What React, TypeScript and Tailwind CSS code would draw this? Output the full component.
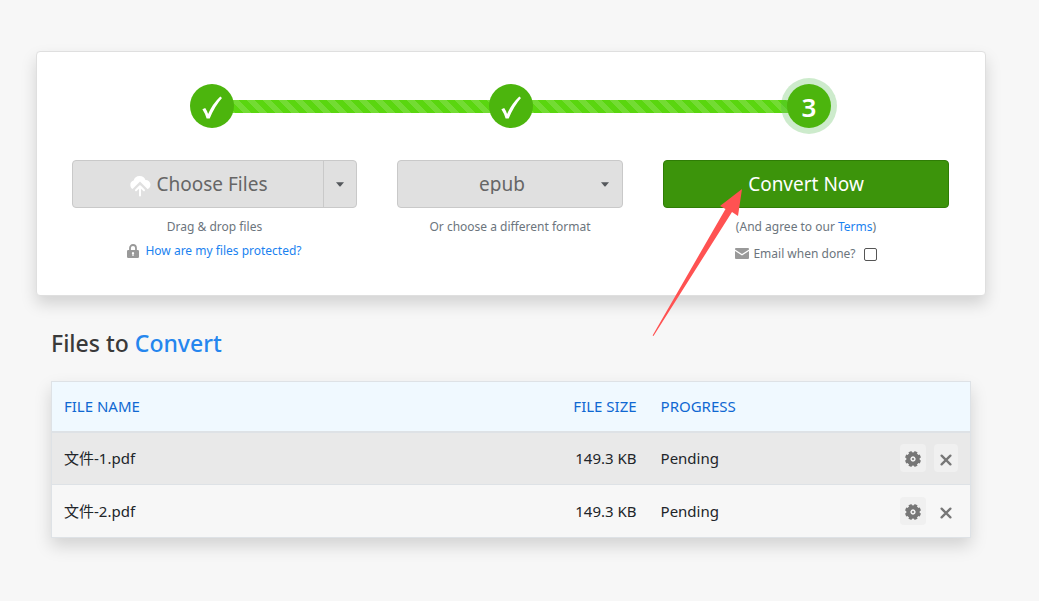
import type { ReactNode } from 'react';

const files = [
  { name: '文件-1.pdf', size: '149.3 KB', status: 'Pending' },
  { name: '文件-2.pdf', size: '149.3 KB', status: 'Pending' },
];

function StepBadge({ children }: { children: ReactNode }) {
  return (
    <li className="z-10 flex size-11 shrink-0 items-center justify-center rounded-full bg-[#4cb50d]">
      {children}
    </li>
  );
}

function CheckMark() {
  return (
    <svg viewBox="0 0 44 44" className="size-11" role="img" aria-label="Done">
      <path d="M12.4 25.2 L15.2 24 Q17 26.500 18.100 30 Q22.500 20 30.300 12.600 L32 14 Q24.500 22.500 19.700 34.600 L16.600 34.600 Q15 29 12.400 25.200 Z" fill="#fff" />
    </svg>
  );
}

function StepBar() {
  return (
    <li
      aria-hidden="true"
      className="-mx-1 h-[13px] flex-1 bg-[#5ad60f] bg-[linear-gradient(45deg,rgba(255,255,255,.15)_25%,transparent_25%,transparent_50%,rgba(255,255,255,.15)_50%,rgba(255,255,255,.15)_75%,transparent_75%)] bg-[length:16px_16px]"
    />
  );
}

function Caret() {
  return (
    <svg viewBox="0 0 8 5" className="h-[5px] w-2" fill="#55585c" aria-hidden="true">
      <path d="M0 0.300H8L4.600 4.200Q4 4.800 3.400 4.200Z" />
    </svg>
  );
}

function CloudUp() {
  return (
    <svg viewBox="0 0 22 22" className="h-[22px] w-[22px]" aria-hidden="true">
      <path
        d="M5.200 14.500A4.700 4.700 0 0 1 4.600 5.400A6.300 6.300 0 0 1 16.500 5.100A4.700 4.700 0 0 1 17 14.500Z"
        fill="#fff"
      />
      <path d="M4.800 16.200L11 10L17.200 16.200" fill="none" stroke="#e0e0e0" strokeWidth="5" />
      <path d="M11 20.500V12M7 15.300L11 11.300L15 15.300" fill="none" stroke="#fff" strokeWidth="2" strokeLinecap="round" strokeLinejoin="round" />
    </svg>
  );
}

function Lock() {
  return (
    <svg viewBox="0 0 12 14" className="h-[14px] w-3" aria-hidden="true">
      <path d="M3 6.500V4a3 3 0 0 1 6 0v2.500" fill="none" stroke="#999" strokeWidth="1.800" />
      <rect y="6" width="12" height="8" rx="1.200" fill="#999" />
      <path d="M6 8a1.200 1.200 0 0 1 .6 2.200V12H5.400v-1.800A1.200 1.200 0 0 1 6 8Z" fill="#fff" />
    </svg>
  );
}

function Envelope() {
  return (
    <svg viewBox="0 0 14 11" className="h-[11px] w-[14px]" fill="#999" aria-hidden="true">
      <path d="M1 0H13Q14 0 14 1V1.600L7 6L0 1.600V1Q0 0 1 0Z" />
      <path d="M0 3L7 7.400L14 3V10Q14 11 13 11H1Q0 11 0 10Z" />
    </svg>
  );
}

function Gear() {
  return (
    <svg viewBox="0 0 16 16" className="size-4" aria-hidden="true">
      <circle cx="8" cy="8" r="4.600" fill="none" stroke="#777" strokeWidth="4.400" />
      <g stroke="#777" strokeWidth="3.200">
        <path d="M8 0V3M8 13V16M0 8H3M13 8H16" transform="rotate(22.500 8 8)" />
        <path d="M8 0V3M8 13V16M0 8H3M13 8H16" transform="rotate(67.500 8 8)" />
      </g>
      <circle cx="8" cy="8" r="2.500" fill="#f0f0f0" />
      <circle cx="8" cy="8" r="1.100" fill="#777" />
    </svg>
  );
}

function Cross() {
  return (
    <svg viewBox="0 0 12 12" className="size-3" aria-hidden="true">
      <path d="M1.600 1.600L10.400 10.400M10.400 1.600L1.600 10.400" stroke="#777" strokeWidth="2.300" strokeLinecap="round" />
    </svg>
  );
}

function Pointer() {
  return (
    <svg viewBox="0 0 92 150" className="pointer-events-none absolute top-7 left-1/2 -ml-[154px] h-[150px] w-[92px]" aria-hidden="true">
      <path d="M90 1L86 28L80 24L1.500 148L.6 147.500L73.500 21L68 18Z" fill="#ff5252" />
    </svg>
  );
}

export default function App() {
  return (
    <div className="min-h-screen bg-[#f7f7f7] pt-[51px] pr-[53px] pb-16 pl-9 font-['Noto_Sans','Noto_Sans_CJK_SC',sans-serif] text-[#212529]">
      <section className="rounded border border-[#dfdfdf] bg-white pt-8 pr-9 pb-[31px] pl-[35px] shadow-[0_8px_16px_rgba(0,0,0,0.15)]">
        <ol className="mx-[118px] flex items-center">
          <StepBadge>
            <CheckMark />
          </StepBadge>
          <StepBar />
          <StepBadge>
            <CheckMark />
          </StepBadge>
          <StepBar />
          <li className="z-10 flex size-11 shrink-0 items-center justify-center rounded-full bg-[#4cb50d] pt-0.5 text-[26px] leading-none font-semibold text-white ring-6 ring-[#4db848]/28">
            3
          </li>
        </ol>

        <div className="mt-8 grid grid-cols-[285fr_226fr_286fr] gap-10 text-center text-xs leading-5 text-[#6c757d]">
          <div>
            <div className="flex h-12 rounded border border-[#c9c9c9] bg-[#e0e0e0] text-[19px] text-[#666]">
              <button type="button" className="flex flex-1 items-center justify-center gap-1.5">
                <span className="pt-1">
                  <CloudUp />
                </span>
                Choose Files
              </button>
              <button type="button" aria-label="More sources" className="flex w-[33px] items-center justify-center border-l border-[#c9c9c9]">
                <Caret />
              </button>
            </div>
            <p className="mt-[9px]">Drag &amp; drop files</p>
            <p className="mt-1 flex items-center justify-center gap-1.5">
              <Lock />
              <a href="#protection" className="text-[#1a82f0]">How are my files protected?</a>
            </p>
          </div>

          <div>
            <div className="relative">
              <select
                aria-label="Output format"
                defaultValue="epub"
                className="h-12 w-full appearance-none rounded border border-[#c9c9c9] bg-[#e0e0e0] pr-4 text-center text-[19px] text-[#666]"
              >
                <option>epub</option>
                <option>mobi</option>
                <option>docx</option>
              </select>
              <span className="pointer-events-none absolute inset-y-0 right-[14px] flex items-center">
                <Caret />
              </span>
            </div>
            <p className="mt-[9px]">Or choose a different format</p>
          </div>

          <div className="relative">
            <button type="button" className="block h-12 w-full rounded border border-[#2f7d06] bg-[#3c940b] text-[19px] text-white">
              Convert Now
            </button>
            <p className="mt-[9px]">
              (And agree to our <a href="#terms" className="text-[#1a82f0]">Terms</a>)
            </p>
            <div className="mt-[7px] flex items-center justify-center gap-1">
              <span className="pb-0.5">
                <Envelope />
              </span>
              <label htmlFor="email-done">Email when done?</label>
              <input
                id="email-done"
                type="checkbox"
                className="ml-1 size-[13px] appearance-none rounded-[2px] border border-[#555] bg-white checked:bg-[#1a82f0]"
              />
            </div>
            <Pointer />
          </div>
        </div>
      </section>

      <main className="px-[15px]">
        <h2 className="mt-[31px] text-[23px] leading-8 font-medium text-[#3a3a3a]">
          Files to <span className="text-[#2586ee]">Convert</span>
        </h2>
        <table className="mt-[22px] w-full table-fixed border-collapse border border-[#dee2e6] text-[15px] leading-6 shadow-[0_8px_16px_rgba(0,0,0,0.15)]">
          <thead>
            <tr className="h-[50px] border-b-2 border-[#dee2e6] bg-[#f0f9ff] text-left text-[#0f68d2]">
              <th className="px-3 font-normal">FILE NAME</th>
              <th className="w-[110px] px-3 text-right font-normal">FILE SIZE</th>
              <th className="w-[26%] px-3 font-normal">PROGRESS</th>
              <th className="w-[83px] px-3" aria-label="Actions" />
            </tr>
          </thead>
          <tbody>
            {files.map((file) => (
              <tr key={file.name} className="group h-[53px] border-b border-[#dee2e6] bg-[#f7f7f7] odd:bg-[#e9e9e9]">
                <td className="px-3">{file.name}</td>
                <td className="px-3 text-right">{file.size}</td>
                <td className="px-3">{file.status}</td>
                <td className="pr-3">
                  <div className="flex items-center justify-end gap-2">
                    <button type="button" aria-label={`Settings for ${file.name}`} className="flex h-7 w-[26px] items-center justify-center rounded bg-[#f0f0f0] pt-0.5">
                      <Gear />
                    </button>
                    <button type="button" aria-label={`Remove ${file.name}`} className="flex h-7 w-6 items-center justify-center rounded pt-1 group-odd:bg-[#f0f0f0]">
                      <Cross />
                    </button>
                  </div>
                </td>
              </tr>
            ))}
          </tbody>
        </table>
      </main>
    </div>
  );
}
